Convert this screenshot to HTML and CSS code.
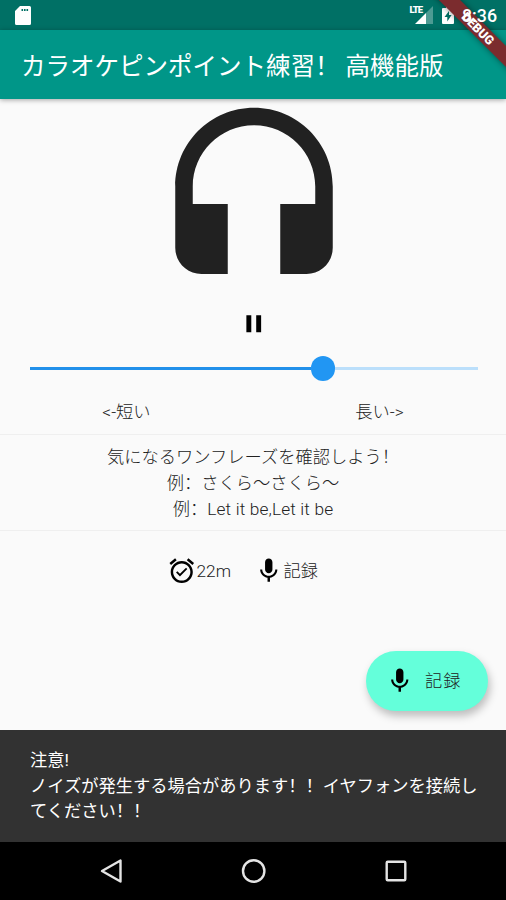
FILE: index.html
```html
<!DOCTYPE html>
<html lang="zh-CN">
<head>
  <meta charset="UTF-8">
  <meta name="viewport" content="width=device-width, initial-scale=1.0">
  <title>カラオケピンポイント練習！ 高機能版</title>
  <link rel="stylesheet" href="styles.css">
</head>
<body>
  <div class="screen">
    <div class="status-bar">
      <svg class="sd-icon" viewBox="0 0 16 19"><path fill-rule="evenodd" d="M5 0h9.500a1.500 1.500 0 0 1 1.500 1.500v16a1.500 1.500 0 0 1-1.500 1.500h-13A1.500 1.500 0 0 1 0 17.500V5zM6.500 3v2h1.600V3zM9 3v2h1.600V3zM11.500 3v2h1.600V3z"/></svg>
      <div class="status-right">
        <span class="lte">LTE</span>
        <svg class="signal-icon" viewBox="0 0 18 18"><path opacity=".3" d="M18 0v18h-7V7z"/><path d="M11 7v11H0z"/></svg>
        <svg class="battery-icon" viewBox="0 0 12 18"><path fill-rule="evenodd" d="M4 0h4v2h3a1 1 0 0 1 1 1v14a1 1 0 0 1-1 1H1a1 1 0 0 1-1-1V3a1 1 0 0 1 1-1h3zM7 5l-4.500 6H5.300v4.500L9.600 9H7z"/></svg>
        <span class="clock">8:36</span>
      </div>
    </div>

    <header class="app-bar">
      <h1>カラオケピンポイント練習！ 高機能版</h1>
    </header>
    <div class="debug-banner">DEBUG</div>

    <main class="content">
      <svg class="headset" viewBox="0 0 24 24"><path d="M12 1c-4.970 0-9 4.030-9 9v7c0 1.660 1.340 3 3 3h3v-8H5v-2c0-3.870 3.130-7 7-7s7 3.130 7 7v2h-4v8h3c1.660 0 3-1.340 3-3v-7c0-4.970-4.030-9-9-9z"/></svg>

      <svg class="icon pause" viewBox="0 0 24 24"><path d="M6 19h4V5H6v14zm8-14v14h4V5h-4z"/></svg>

      <div class="slider">
        <div class="slider-active"></div>
        <div class="slider-thumb"></div>
        <div class="slider-rest"></div>
      </div>

      <div class="labels">
        <span>&lt;-短い</span>
        <span>長い-&gt;</span>
      </div>

      <div class="phrase">
        <p>気になるワンフレーズを確認しよう！</p>
        <p>例：さくら～さくら～</p>
        <p>例：<span class="latin">Let it be,Let it be</span></p>
      </div>

      <div class="info">
        <div class="info-item">
          <svg class="icon" viewBox="0 0 24 24"><path d="M22 5.720l-4.600-3.860-1.290 1.530 4.600 3.860L22 5.720zM7.880 3.390L6.600 1.860 2 5.710l1.290 1.530 4.590-3.850zM12 4c-4.970 0-9 4.030-9 9s4.020 9 9 9c4.970 0 9-4.030 9-9s-4.030-9-9-9zm0 16c-3.870 0-7-3.130-7-7s3.130-7 7-7 7 3.130 7 7-3.130 7-7 7zm-1.460-5.470L8.410 12.400l-1.060 1.060 3.180 3.180 6-6-1.060-1.060-4.930 4.950z"/></svg>
          <span>22m</span>
        </div>
        <div class="info-item">
          <svg class="icon" viewBox="0 0 24 24"><path d="M12 14c1.660 0 2.990-1.340 2.990-3L15 5c0-1.660-1.340-3-3-3S9 3.340 9 5v6c0 1.660 1.340 3 3 3zm5.300-3c0 3-2.540 5.100-5.300 5.100S6.700 14 6.700 11H5c0 3.410 2.720 6.230 6 6.720V21h2v-3.280c3.280-.48 6-3.300 6-6.720h-1.700z"/></svg>
          <span>記録</span>
        </div>
      </div>

      <button class="fab">
        <svg class="icon" viewBox="0 0 24 24"><path d="M12 14c1.660 0 2.990-1.340 2.990-3L15 5c0-1.660-1.340-3-3-3S9 3.340 9 5v6c0 1.660 1.340 3 3 3zm5.300-3c0 3-2.540 5.100-5.300 5.100S6.700 14 6.700 11H5c0 3.410 2.720 6.230 6 6.720V21h2v-3.280c3.280-.48 6-3.300 6-6.720h-1.700z"/></svg>
        <span>記録</span>
      </button>
    </main>

    <div class="snackbar">
      <p>注意!</p>
      <p>ノイズが発生する場合があります！！イヤフォンを接続してください！！</p>
    </div>

    <nav class="nav-bar">
      <svg viewBox="0 0 26 26"><path d="M21.500 2.500v21L3 13z"/></svg>
      <svg viewBox="0 0 26 26"><circle cx="12.700" cy="13" r="10.700"/></svg>
      <svg viewBox="0 0 26 26"><rect x="3.700" y="3.700" width="18.600" height="18.600" rx="1"/></svg>
    </nav>
  </div>
</body>
</html>
```

FILE: styles.css
```css
* {
  box-sizing: border-box;
}

body {
  margin: 0;
  font-family: Roboto, "Noto Sans CJK SC", sans-serif;
  font-size: 17.25px;
  line-height: 25.7px;
  color: #212121;
  background-color: #fafafa;
}

h1, p {
  margin: 0;
}

svg {
  display: block;
  flex-shrink: 0;
}

.screen {
  position: relative;
  display: flex;
  flex-direction: column;
  width: 506px;
  height: 900px;
  overflow: hidden;
}

.status-bar {
  display: flex;
  justify-content: space-between;
  align-items: center;
  height: 30px;
  padding: 0 9px 0 15px;
  background-color: #007065;
  color: white;
  fill: white;
}

.status-right {
  display: flex;
  align-items: center;
}

.sd-icon {
  width: 16px;
  height: 19px;
}

.lte {
  align-self: flex-start;
  margin: 4px -7px 0 0;
  font-size: 9.5px;
  font-weight: 900;
  line-height: 10px;
  letter-spacing: -1px;
}

.signal-icon {
  width: 18px;
  height: 18px;
}

.battery-icon {
  width: 12px;
  height: 18px;
  margin: 0 8px 0 9px;
}

/* the clock stays readable above the ribbon */
.clock {
  position: relative;
  z-index: 3;
  padding-top: 2px;
  font-size: 17.8px;
  font-weight: 500;
}

.app-bar {
  display: flex;
  align-items: center;
  height: 68.5px;
  padding: 5px 20px 0 21px;
  background-color: #009688;
  box-shadow: 0 1px 5px rgba(0, 0, 0, 0.35);
  z-index: 1;
}

.app-bar h1 {
  font-size: 24.5px;
  font-weight: 400;
  line-height: 36px;
  color: white;
  white-space: nowrap;
}

/* corner ribbon over the bars */
.debug-banner {
  position: absolute;
  top: 21px;
  left: 418px;
  z-index: 2;
  width: 120px;
  height: 15px;
  transform: rotate(45deg);
  background-color: #7b2c2e;
  box-shadow: 0 0 6px rgba(0, 0, 0, 0.45);
  color: white;
  font-size: 12.5px;
  font-weight: 900;
  line-height: 15px;
  text-align: center;
}

.content {
  display: flex;
  flex-direction: column;
  height: 631px;
  background-color: #fafafa;
}

.headset {
  align-self: center;
  width: 210px;
  height: 210px;
  margin-left: 2px;
  fill: #212121;
}

.icon {
  width: 29.5px;
  height: 29.5px;
  fill: black;
}

.pause {
  align-self: center;
  margin: 0 0 1px 1px;
}

.slider {
  display: flex;
  align-items: center;
  height: 24px;
  margin: 17.5px 28px 0 30px;
}

.slider-active {
  width: 280.5px;
  height: 2.6px;
  background-color: #2190ea;
}

.slider-thumb {
  width: 24.5px;
  height: 24.5px;
  border-radius: 50%;
  background-color: #2196f3;
}

.slider-rest {
  flex: 1;
  height: 2.6px;
  background-color: #bbdffb;
}

.labels {
  display: flex;
  justify-content: space-around;
  padding: 19px 0 8.5px;
  font-weight: 300;
}

.labels span {
  flex: 1;
  text-align: center;
}

.phrase {
  padding: 10.5px 0 7.5px;
  border-top: 1px solid #efefef;
  border-bottom: 1px solid #efefef;
  font-weight: 300;
  text-align: center;
}

.latin {
  letter-spacing: 0.15px;
}

.info {
  display: flex;
  gap: 23px;
  padding: 25px 0 0 167px;
  font-weight: 300;
}

.info-item {
  display: flex;
  align-items: center;
}

.info-item span {
  padding-top: 2px;
}

.fab {
  display: flex;
  align-items: center;
  align-self: flex-end;
  gap: 11px;
  width: 122px;
  height: 59.5px;
  margin: auto 18.5px 19px 0;
  padding: 0 0 0 19px;
  border: none;
  border-radius: 30px;
  background-color: #64ffda;
  box-shadow: 2px 5px 8px rgba(0, 0, 0, 0.25);
  color: #212121;
  font: inherit;
  font-weight: 300;
  letter-spacing: 1px;
}

.fab span {
  padding-top: 2px;
}

.snackbar {
  height: 112.5px;
  padding: 18.5px 28px 0 30px;
  background-color: #323232;
  color: white;
}

.nav-bar {
  display: flex;
  justify-content: space-between;
  align-items: center;
  flex: 1;
  padding: 0 97px 0 99px;
  background-color: black;
}

.nav-bar svg {
  width: 26px;
  height: 26px;
  fill: none;
  stroke: #e4e4e4;
  stroke-width: 2.4;
  stroke-linejoin: round;
}
```
